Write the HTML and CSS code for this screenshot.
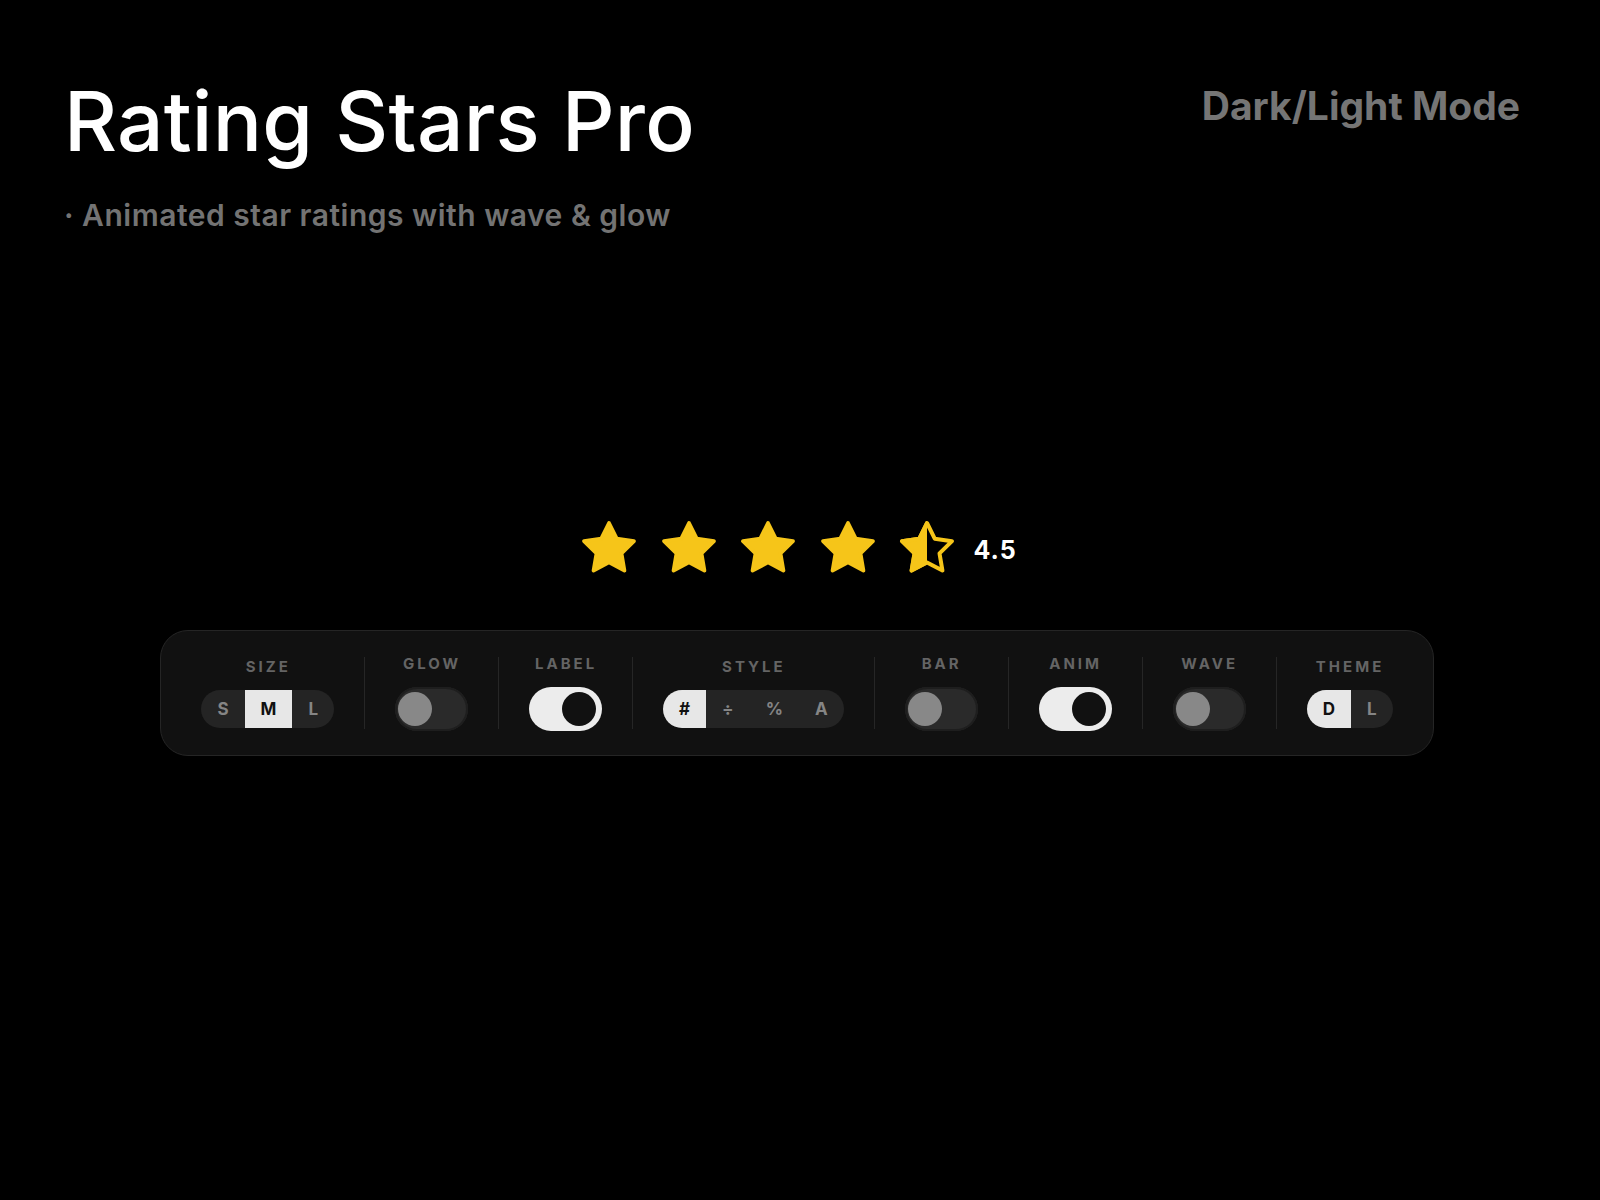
FILE: index.html
```html
<!DOCTYPE html>
<html lang="en">
<head>
<meta charset="utf-8">
<title>Rating Stars Pro</title>
<link rel="stylesheet" href="styles.css">
</head>
<body>
<header class="top">
  <div class="titles">
    <h1 class="title">Rating Stars Pro</h1>
    <p class="subtitle">· Animated star ratings with wave &amp; glow</p>
  </div>
  <div class="mode">Dark/Light Mode</div>
</header>

<main class="stage">
  <div class="rating">
    <div class="stars">
      <svg class="star" viewBox="0 0 24 24"><polygon class="full" points="12 2 15.09 8.26 22 9.27 17 14.14 18.18 21.02 12 17.77 5.82 21.02 7 14.14 2 9.27 8.91 8.26 12 2"/></svg>
      <svg class="star" viewBox="0 0 24 24"><polygon class="full" points="12 2 15.09 8.26 22 9.27 17 14.14 18.18 21.02 12 17.77 5.82 21.02 7 14.14 2 9.27 8.91 8.26 12 2"/></svg>
      <svg class="star" viewBox="0 0 24 24"><polygon class="full" points="12 2 15.09 8.26 22 9.27 17 14.14 18.18 21.02 12 17.77 5.82 21.02 7 14.14 2 9.27 8.91 8.26 12 2"/></svg>
      <svg class="star" viewBox="0 0 24 24"><polygon class="full" points="12 2 15.09 8.26 22 9.27 17 14.14 18.18 21.02 12 17.77 5.82 21.02 7 14.14 2 9.27 8.91 8.26 12 2"/></svg>
      <svg class="star" viewBox="0 0 24 24">
        <defs><clipPath id="halfclip"><rect x="0" y="0" width="12" height="24"/></clipPath></defs>
        <polygon class="half-fill" clip-path="url(#halfclip)" points="12 2 15.09 8.26 22 9.27 17 14.14 18.18 21.02 12 17.77 5.82 21.02 7 14.14 2 9.27 8.91 8.26 12 2"/>
        <polygon class="outline" points="12 2 15.09 8.26 22 9.27 17 14.14 18.18 21.02 12 17.77 5.82 21.02 7 14.14 2 9.27 8.91 8.26 12 2"/>
      </svg>
    </div>
    <span class="value">4.5</span>
  </div>

  <div class="panel">
    <div class="group">
      <span class="label">SIZE</span>
      <div class="seg">
        <span class="opt">S</span><span class="opt active">M</span><span class="opt">L</span>
      </div>
    </div>
    <span class="divider"></span>
    <div class="group">
      <span class="label">GLOW</span>
      <div class="toggle"><span class="knob"></span></div>
    </div>
    <span class="divider"></span>
    <div class="group">
      <span class="label">LABEL</span>
      <div class="toggle on"><span class="knob"></span></div>
    </div>
    <span class="divider"></span>
    <div class="group">
      <span class="label">STYLE</span>
      <div class="seg">
        <span class="opt active">#</span><span class="opt">÷</span><span class="opt">%</span><span class="opt">A</span>
      </div>
    </div>
    <span class="divider"></span>
    <div class="group">
      <span class="label">BAR</span>
      <div class="toggle"><span class="knob"></span></div>
    </div>
    <span class="divider"></span>
    <div class="group">
      <span class="label">ANIM</span>
      <div class="toggle on"><span class="knob"></span></div>
    </div>
    <span class="divider"></span>
    <div class="group">
      <span class="label">WAVE</span>
      <div class="toggle"><span class="knob"></span></div>
    </div>
    <span class="divider"></span>
    <div class="group">
      <span class="label">THEME</span>
      <div class="seg">
        <span class="opt active">D</span><span class="opt">L</span>
      </div>
    </div>
  </div>
</main>
</body>
</html>
```

FILE: styles.css
```css
* { box-sizing: border-box; }

html, body {
  margin: 0;
  background: #000;
}

body {
  font-family: Inter, "Noto Sans", "Liberation Sans", sans-serif;
  color: #fff;
  min-height: 1200px;
}

.top {
  display: flex;
  justify-content: space-between;
  align-items: flex-start;
  padding: 81px 80px 0 64px;
}

.title {
  margin: 0;
  font-size: 82px;
  line-height: 82px;
  font-weight: 500;
  letter-spacing: 0.2px;
  color: #fff;
}

.subtitle {
  margin: 35px 0 0;
  font-size: 30px;
  line-height: 35px;
  font-weight: 600;
  letter-spacing: 0.5px;
  color: #737373;
}

.mode {
  margin-top: 5px;
  font-size: 39px;
  line-height: 39px;
  font-weight: 700;
  color: #757575;
}

.stage {
  display: flex;
  flex-direction: column;
  align-items: center;
  margin-top: 285px;
}

.rating {
  display: flex;
  align-items: center;
  gap: 16px;
  margin-right: 4px;
}

.stars {
  display: flex;
  gap: 19.5px;
}

.star {
  width: 60px;
  height: 60px;
  display: block;
}

.star .full,
.star .half-fill {
  fill: #f6c519;
  stroke: #f6c519;
  stroke-width: 1.5;
  stroke-linejoin: round;
}

.star .outline {
  fill: none;
  stroke: #f6c519;
  stroke-width: 1.6;
  stroke-linejoin: round;
}

.value {
  font-size: 25px;
  font-weight: 700;
  letter-spacing: 1px;
  color: #fff;
  margin-top: 3px;
}

.panel {
  display: flex;
  align-items: center;
  gap: 30px;
  margin-top: 52px;
  margin-right: 6px;
  padding: 24px 40px;
  background: #111;
  border: 1px solid #252525;
  border-radius: 28px;
}

.group {
  display: flex;
  flex-direction: column;
  align-items: center;
  gap: 14px;
}

.label {
  font-size: 15px;
  line-height: 18px;
  font-weight: 700;
  letter-spacing: 3px;
  padding-left: 1px;
  color: #646464;
}

.divider {
  width: 1px;
  height: 72px;
  background: #262626;
}

.seg {
  display: flex;
  height: 38px;
  border-radius: 19px;
  overflow: hidden;
  background: #242424;
}

.opt {
  padding: 0 16px;
  font-size: 17px;
  line-height: 38px;
  font-weight: 700;
  color: #858585;
}

.opt.active {
  background: #e7e7e7;
  color: #111;
}

.toggle {
  position: relative;
  width: 73px;
  height: 44px;
  border-radius: 22px;
  background: #2a2a2a;
  box-shadow: inset 0 0 0 2px #1e1e1e;
}

.toggle .knob {
  position: absolute;
  top: 5px;
  left: 3px;
  width: 34px;
  height: 34px;
  border-radius: 50%;
  background: #888;
}

.toggle.on {
  background: #ececec;
  box-shadow: none;
}

.toggle.on .knob {
  left: 33px;
  background: #111;
}
```
